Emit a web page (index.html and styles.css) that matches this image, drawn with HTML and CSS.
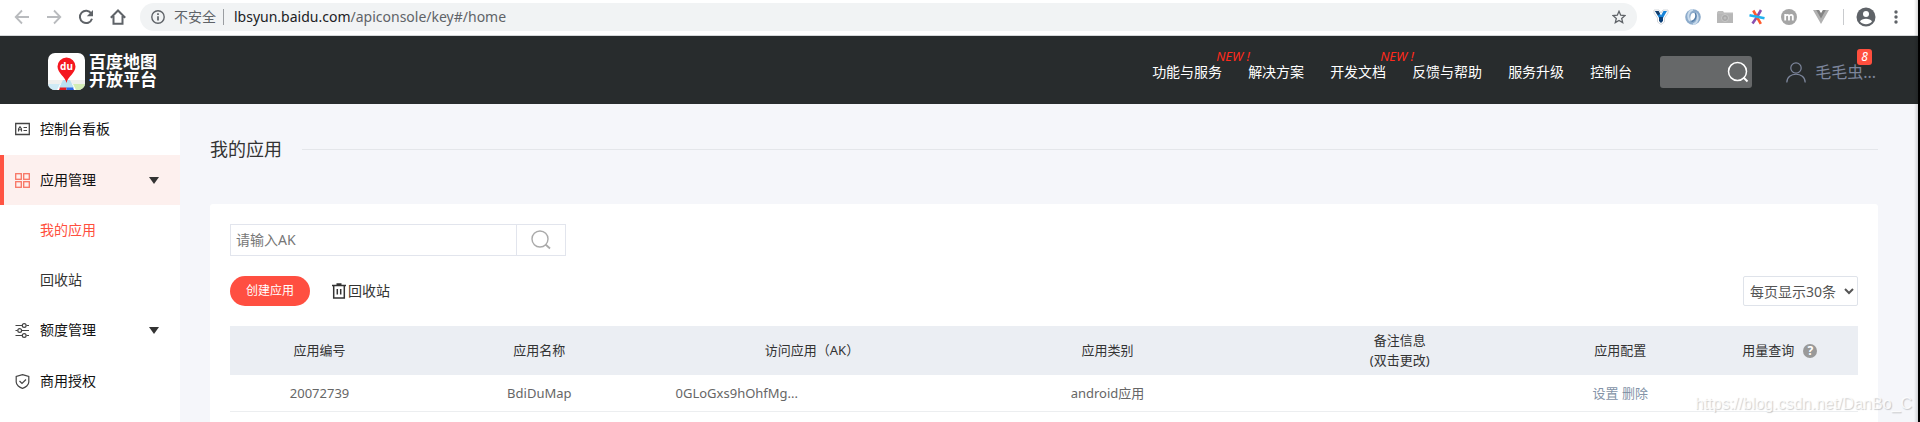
FILE: index.html
```html
<!DOCTYPE html>
<html lang="zh-CN">
<head>
    <meta charset="UTF-8">
    <meta name="viewport" content="width=device-width, initial-scale=1.0">
    <title>控制台 | 百度地图开放平台</title>
    <link rel="stylesheet" href="styles.css">
</head>
<body>
    <div class="window">
        <div class="toolbar">
            <button class="tool-btn disabled" aria-label="后退">
                <svg width="16" height="16" viewBox="0 0 16 16"><path d="M15 8H2M8 1.500L1.700 8L8 14.500" fill="none" stroke="currentColor" stroke-width="1.800"/></svg>
            </button>
            <button class="tool-btn disabled" aria-label="前进">
                <svg width="16" height="16" viewBox="0 0 16 16"><path d="M1 8H14M8 1.500L14.300 8L8 14.500" fill="none" stroke="currentColor" stroke-width="1.800"/></svg>
            </button>
            <button class="tool-btn" aria-label="刷新">
                <svg width="16" height="16" viewBox="0 0 16 16"><path d="M13.300 4.500A6.200 6.200 0 1 0 14 9.800" fill="none" stroke="currentColor" stroke-width="2"/><path d="M15 1V7.200H8.800Z" fill="currentColor"/></svg>
            </button>
            <button class="tool-btn" aria-label="主页">
                <svg width="16" height="16" viewBox="0 0 16 16"><path d="M.8 8.700L8 1.500L15.200 8.700M3.500 7V14.800H12.500V7" fill="none" stroke="currentColor" stroke-width="2"/></svg>
            </button>
            <div class="address">
                <svg width="14" height="14" viewBox="0 0 14 14"><circle cx="7" cy="7" r="6.200" fill="none" stroke="currentColor" stroke-width="1.400"/><path d="M7 6.200V10.500M7 3.300V5" stroke="currentColor" stroke-width="1.700"/></svg>
                <span class="insecure">不安全</span>
                <span class="url"><b>lbsyun.baidu.com</b>/apiconsole/key#/home</span>
                <svg class="star" width="14" height="14" viewBox="0 0 14 14"><path d="M7 1.300L8.700 5.200L13 5.600L9.700 8.400L10.700 12.600L7 10.400L3.300 12.600L4.300 8.400L1 5.600L5.300 5.200Z" fill="none" stroke="currentColor" stroke-width="1.300"/></svg>
            </div>
            <div class="extensions">
                <svg width="16" height="16" viewBox="0 0 16 16"><path d="M1 1H6L8 4L10 1H15V4L11.500 9V13L8 15.500L4.500 13V9L1 4Z" fill="#fff" stroke="#d5d8dc"/><path d="M2 2H5.500L8 6.500L10.500 2H14L10 9H6Z" fill="#1683d8"/><path d="M6 8H10V12L8 14L6 12Z" fill="#0b3f77"/><path d="M2 2H5.500L7 4.700L5 6.500Z" fill="#163b66"/></svg>
                <svg width="16" height="16" viewBox="0 0 16 16"><circle cx="8" cy="8" r="7.800" fill="#8cabcb"/><path d="M8 .5C3 2 2 8 5 12M8 15.500C13 14 14 8 11 4" fill="none" stroke="#c9dbec" stroke-width="2"/><ellipse cx="8" cy="8" rx="2.600" ry="4" fill="#fff" transform="rotate(12 8 8)"/><path d="M10.500 4C12 8 10 11.500 6.500 12.500" fill="none" stroke="#577fa9" stroke-width="1.500"/></svg>
                <svg width="16" height="16" viewBox="0 0 16 16"><path d="M0 14V3.500L1 2H6L7 3.500H16V14Z" fill="#bdbdbd"/><path d="M0 5H16V14H0Z" fill="#b7b7b7"/><circle cx="8" cy="9" r="3.500" fill="#a8a8a8" stroke="#c9c9c9"/><circle cx="8" cy="9" r="1.500" fill="#bdbdbd"/></svg>
                <svg width="16" height="16" viewBox="0 0 16 16" stroke-width="2.600"><path d="M12 1L8 8L3.500 14.500" stroke="#8a4fb0"/><path d="M4.300 1.500L11.800 14.800" stroke="#ff5a2c"/><path d="M.5 6.300L15.500 9.300" stroke="#21b2ee"/></svg>
                <svg width="16" height="16" viewBox="0 0 16 16"><circle cx="8" cy="8" r="8" fill="#a5a5a5"/><path d="M4.200 11.500V5M4.200 7.500C4.500 5.200 8 5.200 8 7.500V11.500M8 7.500C8.300 5.200 11.800 5.200 11.800 7.500V11.500" fill="none" stroke="#fff" stroke-width="1.800"/></svg>
                <svg width="16" height="16" viewBox="0 0 16 16"><path d="M0 1H6L8 4.500L10 1H16L8 15Z" fill="#b1b1b1"/><path d="M3.200 1H6L8 4.500L10 1H12.800L8 9.500Z" fill="#858585"/></svg>
            </div>
            <button class="tool-btn profile" aria-label="用户">
                <svg width="20" height="20" viewBox="0 0 20 20"><circle cx="10" cy="10" r="9.500" fill="currentColor"/><circle cx="10" cy="7" r="3" fill="#fff"/><path d="M4 14.500C5.500 10.800 14.500 10.800 16 14.500C13 18 7 18 4 14.500Z" fill="#fff"/></svg>
            </button>
            <button class="tool-btn" aria-label="更多">
                <svg width="16" height="16" viewBox="0 0 16 16" fill="currentColor"><circle cx="8" cy="3" r="1.700"/><circle cx="8" cy="8" r="1.700"/><circle cx="8" cy="13" r="1.700"/></svg>
            </button>
        </div>

        <header class="header">
            <a class="logo" href="#">
                <svg width="37" height="37" viewBox="0 0 37 37">
                    <defs><clipPath id="logo-clip"><rect width="37" height="37" rx="7"/></clipPath></defs>
                    <g clip-path="url(#logo-clip)">
                        <rect width="37" height="37" fill="#fff"/>
                        <path d="M0 27H37V31H0Z" fill="#f0f0ee"/>
                        <path d="M0 31H12L9 37H0Z" fill="#cfeaf5"/>
                        <path d="M25 31H37V37H28Z" fill="#d3edb6"/>
                        <path d="M15 27H22L26 35H11Z" fill="#b9e0f2"/>
                        <path d="M12 34.500H18.500V37H11Z" fill="#e21b22"/>
                        <path d="M18.500 34.500H25L26 37H18.500Z" fill="#2b68e8"/>
                    </g>
                    <path d="M18.500 30C17.500 24 9.500 20 9.500 13.500A9 9 0 0 1 27.500 13.500C27.500 20 19.500 24 18.500 30Z" fill="#f5171f"/>
                    <text x="18.500" y="17" text-anchor="middle" class="logo-du">du</text>
                </svg>
                <span class="logo-name"><span>百度地图</span><span>开放平台</span></span>
            </a>
            <nav class="nav">
                <a href="#">功能与服务<i class="new">NEW !</i></a>
                <a href="#">解决方案</a>
                <a href="#">开发文档<i class="new">NEW !</i></a>
                <a href="#">反馈与帮助</a>
                <a href="#">服务升级</a>
                <a href="#">控制台</a>
            </nav>
            <form class="site-search">
                <input type="text" aria-label="搜索">
                <button type="button" aria-label="搜索">
                    <svg width="22" height="22" viewBox="0 0 22 22" fill="none" stroke="#fff" stroke-width="1.500"><circle cx="10.500" cy="10.500" r="9"/><path d="M16.500 16.500L20.500 20.500" stroke-width="2"/></svg>
                </button>
            </form>
            <a class="user" href="#">
                <svg width="20" height="21" viewBox="0 0 20 21" fill="none" stroke="currentColor" stroke-width="1.200"><circle cx="10" cy="6" r="5.200"/><path d="M.8 20.500C.8 9.500 19.200 9.500 19.200 20.500"/></svg>
                <span>毛毛虫...</span>
                <i class="badge">8</i>
            </a>
        </header>

        <div class="body">
            <aside class="sidebar">
                <a class="item" href="#">
                    <svg width="15" height="14" viewBox="0 0 15 14" fill="none" stroke="#444"><path d="M.7 1.500H14.300V12.500H.7Z" stroke-width="1.300"/><path d="M3.500 9.500V7L5 4.800L6.500 7V9.500M3.500 7.700H6.500M8.500 5.500H12M8.500 8.500H12" stroke-width="1.100"/></svg>
                    <span>控制台看板</span>
                </a>
                <button class="item active">
                    <svg width="15" height="15" viewBox="0 0 15 15" fill="none" stroke="#f87463" stroke-width="1.300"><rect x=".7" y=".7" width="5.600" height="5.600"/><rect x="8.700" y=".7" width="5.600" height="5.600"/><rect x=".7" y="8.700" width="5.600" height="5.600"/><rect x="8.700" y="8.700" width="5.600" height="5.600"/></svg>
                    <span>应用管理</span>
                    <span class="caret"></span>
                </button>
                <a class="sub current" href="#">我的应用</a>
                <a class="sub" href="#">回收站</a>
                <button class="item">
                    <svg width="15" height="15" viewBox="0 0 15 15" fill="none" stroke="#444" stroke-width="1.200"><path d="M.5 2.500H7M11.500 2.500H14M.5 7.500H2.500M7 7.500H14M.5 12.500H7M11.500 12.500H14"/><circle cx="9.200" cy="2.500" r="1.900"/><circle cx="4.700" cy="7.500" r="1.900"/><circle cx="9.200" cy="12.500" r="1.900"/></svg>
                    <span>额度管理</span>
                    <span class="caret"></span>
                </button>
                <a class="item" href="#">
                    <svg width="15" height="15" viewBox="0 0 15 15" fill="none" stroke="#444" stroke-width="1.200"><path d="M7.500 .7L13.800 2.500V8C13.800 11 10.500 13.500 7.500 14.300C4.500 13.500 1.200 11 1.200 8V2.500Z"/><path d="M4.500 7L7 9.500L11 5.500"/></svg>
                    <span>商用授权</span>
                </a>
            </aside>

            <main class="main">
                <h1 class="title">我的应用</h1>
                <section class="card">
                    <form class="ak-search">
                        <input type="text" placeholder="请输入AK" aria-label="请输入AK">
                        <button type="button" aria-label="查询">
                            <svg width="20" height="20" viewBox="0 0 20 20" fill="none" stroke="#aaa" stroke-width="1.400"><circle cx="9" cy="9" r="8"/><path d="M14.500 14.500L19 18.500" stroke-width="1.800"/></svg>
                        </button>
                    </form>
                    <div class="actions">
                        <button class="create">创建应用</button>
                        <a class="recycle" href="#">
                            <svg width="14" height="16" viewBox="0 0 14 16" fill="none" stroke="#333" stroke-width="1.500"><path d="M0 2.500H14M4.500 1H9.500M1.700 3V15H12.300V3M5.300 6V11.500M8.700 6V11.500"/></svg>
                            <span>回收站</span>
                        </a>
                        <select class="page-size" aria-label="每页显示">
                            <option>每页显示30条</option>
                            <option>每页显示50条</option>
                        </select>
                    </div>
                    <table class="apps">
                        <colgroup>
                            <col class="c-id">
                            <col class="c-name">
                            <col class="c-ak">
                            <col class="c-type">
                            <col class="c-note">
                            <col class="c-config">
                            <col class="c-usage">
                        </colgroup>
                        <thead>
                            <tr>
                                <th>应用编号</th>
                                <th>应用名称</th>
                                <th>访问应用（AK）</th>
                                <th>应用类别</th>
                                <th>备注信息<br>(双击更改)</th>
                                <th>应用配置</th>
                                <th>用量查询<span class="help">?</span></th>
                            </tr>
                        </thead>
                        <tbody>
                            <tr>
                                <td>20072739</td>
                                <td>BdiDuMap</td>
                                <td class="ak">0GLoGxs9hOhfMg...</td>
                                <td>android应用</td>
                                <td></td>
                                <td><a href="#">设置</a> <a href="#">删除</a></td>
                                <td></td>
                            </tr>
                        </tbody>
                    </table>
                </section>
            </main>
        </div>
        <div class="watermark">https://blog.csdn.net/DanBo_C</div>
    </div>
</body>
</html>
```

FILE: styles.css
```css
* {
    box-sizing: border-box;
    margin: 0;
    padding: 0;
}

body {
    font-family: "Noto Sans", "Noto Sans CJK SC", sans-serif;
    font-size: 14px;
    line-height: 20px;
    color: #333;
    background-color: #f5f6fa;
}

a {
    color: inherit;
    text-decoration: none;
}

button,
input,
select {
    font: inherit;
    color: inherit;
    border: none;
    background: none;
    outline: none;
}

button {
    cursor: pointer;
}

svg {
    display: block;
    flex: none;
}

.window {
    position: relative;
    display: flex;
    flex-direction: column;
    min-height: 100vh;
    border-right: 2px solid #000;
    overflow: hidden;
}

/* soft shade along the window edge */
.window::after {
    content: "";
    position: absolute;
    top: 0;
    right: 0;
    bottom: 0;
    width: 4px;
    background: linear-gradient(to right, transparent, rgba(0, 0, 0, 0.15));
}

/* browser bar */
.toolbar {
    display: flex;
    align-items: center;
    gap: 16px;
    height: 36px;
    padding: 0 14px;
    padding-bottom: 1px;
    background-color: #fff;
    border-bottom: 1px solid #d5d8da;
    color: #5f6368;
}

.tool-btn.disabled {
    color: #b9bbbe;
}

.address {
    flex: 1;
    display: flex;
    align-items: center;
    height: 28px;
    padding: 0 11px;
    margin-left: -2px;
    border-radius: 14px;
    background-color: #f1f3f4;
}

.insecure {
    margin-left: 9px;
    padding-right: 7px;
    line-height: 16px;
    border-right: 1px solid #9a9da1;
}

.url {
    margin-left: 10px;
}

.url b {
    font-weight: normal;
    color: #202124;
}

.star {
    margin-left: auto;
}

.extensions {
    display: flex;
    gap: 16px;
    padding-right: 14px;
    border-right: 1px solid #c9cbce;
}

.profile {
    margin: 0 -4px;
}

/* site header */
.header {
    display: flex;
    align-items: center;
    height: 68px;
    padding: 4px 42px 0 48px;
    background-color: #282c2d;
    color: #fff;
}

.logo {
    display: flex;
    align-items: center;
    gap: 4px;
    margin-right: auto;
    margin-bottom: 2px;
}

.logo-name {
    display: flex;
    flex-direction: column;
    font-size: 17px;
    font-weight: bold;
    line-height: 18px;
}

.logo-du {
    font-size: 10px;
    font-weight: bold;
    fill: #fff;
}

.nav {
    display: flex;
    gap: 26px;
}

.nav a {
    position: relative;
}

.new {
    position: absolute;
    left: 100%;
    top: -16px;
    margin-left: -6px;
    font-size: 13px;
    color: #ff2a1c;
    white-space: nowrap;
}

.site-search {
    display: flex;
    align-items: center;
    width: 92px;
    height: 32px;
    margin: 0 34px 0 28px;
    padding: 0 3px;
    border-radius: 3px;
    background-color: #666869;
}

.site-search input {
    flex: 1;
    min-width: 0;
}

.user {
    position: relative;
    display: flex;
    align-items: center;
    gap: 9px;
    font-size: 16px;
    color: #7d869c;
}

.badge {
    position: absolute;
    right: 4px;
    top: -13px;
    width: 15px;
    height: 16px;
    border-radius: 3px;
    background-color: #ff4f3e;
    font-size: 12px;
    line-height: 16px;
    text-align: center;
    color: #fff;
}

/* console */
.body {
    flex: 1;
    display: flex;
}

.sidebar {
    flex: none;
    display: flex;
    flex-direction: column;
    width: 180px;
    background-color: #fff;
}

.item {
    display: flex;
    align-items: center;
    gap: 10px;
    height: 50px;
    margin-bottom: 1px;
    padding: 0 21px 0 15px;
    color: #111;
}

.item.active {
    margin-bottom: 0;
    padding-left: 11px;
    border-left: 4px solid #ff5443;
    background-color: #fdf0ee;
}

.caret {
    margin-left: auto;
    border: 5px solid transparent;
    border-top: 7px solid #333;
    border-bottom: none;
}

.sub {
    height: 50px;
    padding-left: 40px;
    line-height: 50px;
}

.sub.current {
    color: #ff4f3e;
}

.main {
    flex: 1;
    display: flex;
    flex-direction: column;
    padding: 0 40px 0 30px;
}

.title {
    display: flex;
    align-items: center;
    gap: 20px;
    height: 90px;
    margin-bottom: 10px;
    font-size: 18px;
    font-weight: normal;
}

.title::after {
    content: "";
    flex: 1;
    height: 1px;
    background-color: #e4e6ea;
}

.card {
    flex: 1;
    padding: 20px 20px 0;
    border-radius: 3px 3px 0 0;
    background-color: #fff;
}

.ak-search {
    display: flex;
    width: 336px;
    height: 32px;
    border: 1px solid #e2e5ed;
}

.ak-search input {
    flex: 1;
    padding-left: 5px;
}

.ak-search input::placeholder {
    color: #777;
}

.ak-search button {
    display: flex;
    align-items: center;
    justify-content: center;
    width: 49px;
    border-left: 1px solid #e2e5ed;
}

.actions {
    display: flex;
    align-items: center;
    gap: 22px;
    margin: 20px 0;
}

.create {
    width: 80px;
    height: 30px;
    border-radius: 15px;
    background-color: #ff4f41;
    font-size: 12px;
    color: #fff;
}

.recycle {
    display: flex;
    align-items: center;
    gap: 2px;
}

.page-size {
    width: 115px;
    height: 30px;
    margin-left: auto;
    padding-left: 2px;
    border: 1px solid #dfe3ea;
    border-radius: 2px;
    background-color: #fff;
    color: #555;
}

.apps {
    width: 100%;
    table-layout: fixed;
    border-collapse: collapse;
    font-size: 13px;
    text-align: center;
}

.c-id { width: 11%; }
.c-name { width: 16%; }
.c-ak { width: 17.5%; }
.c-type { width: 18.8%; }
.c-note { width: 17.1%; }
.c-config { width: 10%; }
.c-usage { width: 9.6%; }

.apps th {
    height: 49px;
    padding-bottom: 2px;
    font-weight: normal;
    background-color: #ebeef3;
}

.apps td {
    height: 36px;
    border-bottom: 1px solid #eceef0;
    color: #666;
}

.apps .ak {
    padding-left: 6px;
    text-align: left;
}

.apps td a {
    color: #8393a7;
}

.help {
    display: inline-block;
    width: 14px;
    height: 14px;
    margin-left: 9px;
    border-radius: 50%;
    background-color: #999;
    font-size: 12px;
    font-weight: bold;
    line-height: 14px;
    color: #fff;
}

.watermark {
    position: absolute;
    right: 6px;
    bottom: 8px;
    font-family: "Liberation Sans", sans-serif;
    font-size: 16px;
    color: rgba(255, 255, 255, 0.8);
    text-shadow: 1px 1px 1px rgba(0, 0, 0, 0.2);
    pointer-events: none;
}
```
